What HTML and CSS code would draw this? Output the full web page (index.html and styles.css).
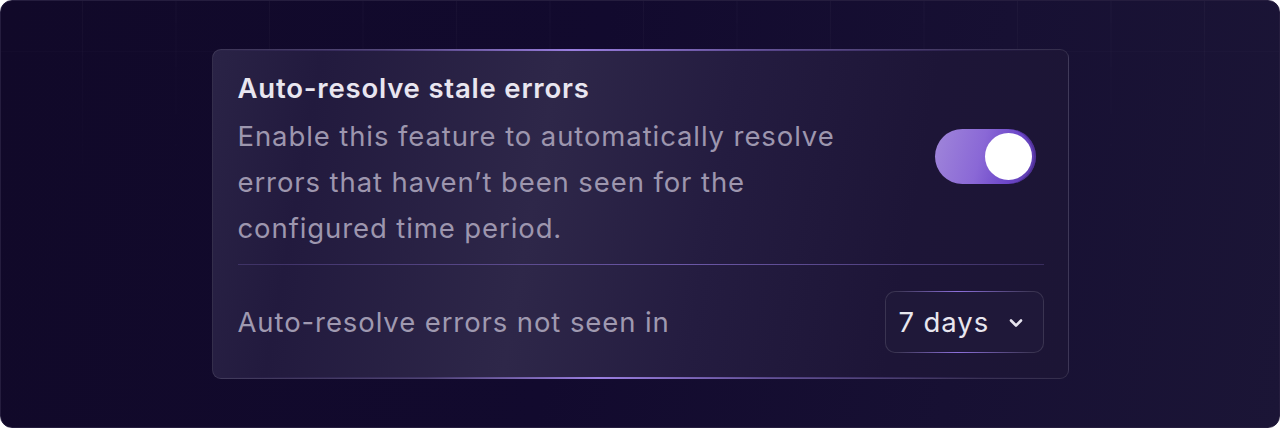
FILE: index.html
```html
<!DOCTYPE html>
<html lang="en">
<head>
<meta charset="utf-8">
<title>Auto-resolve stale errors</title>
<link rel="stylesheet" href="styles.css">
</head>
<body>
<div class="frame">
  <div class="card">
    <div class="card-top">
      <div class="texts">
        <h2 class="title">Auto-resolve stale errors</h2>
        <p class="desc">Enable this feature to automatically resolve errors that haven’t been seen for the configured time period.</p>
      </div>
      <div class="toggle" role="switch" aria-checked="true"><span class="knob"></span></div>
    </div>
    <div class="divider"></div>
    <div class="card-row">
      <span class="row-label">Auto-resolve errors not seen in</span>
      <div class="select">
        <span class="select-value">7 days</span>
        <svg class="chevron" width="16" height="10" viewBox="0 0 16 10" aria-hidden="true"><path d="M3 2.5l5 5 5-5" fill="none" stroke="#e6e3ee" stroke-width="2.6" stroke-linecap="round" stroke-linejoin="round"/></svg>
      </div>
    </div>
  </div>
</div>
</body>
</html>
```

FILE: styles.css
```css
* { box-sizing: border-box; }
html, body { margin: 0; padding: 0; background: #ffffff; }
body { font-family: Inter, "Noto Sans", "Liberation Sans", sans-serif; }

.frame {
  position: relative;
  width: 1280px;
  height: 428px;
  border-radius: 12px;
  overflow: hidden;
  border: 1px solid #251d3e;
  background: linear-gradient(100deg, #110929 0%, #120a2e 45%, #171033 75%, #1b1536 100%);
  display: flex;
  align-items: center;
  justify-content: center;
}
.frame::before {
  content: "";
  position: absolute;
  inset: 0;
  background-image:
    linear-gradient(90deg, rgba(255,255,255,0.03) 1px, transparent 1px),
    linear-gradient(0deg, rgba(255,255,255,0.02) 1px, transparent 1px);
  background-size: 93.5px 93.5px;
  background-position: -12.5px 51px;
  -webkit-mask-image: linear-gradient(180deg, #000 0%, rgba(0,0,0,0.4) 25%, transparent 50%);
  mask-image: linear-gradient(180deg, #000 0%, rgba(0,0,0,0.4) 25%, transparent 50%);
  pointer-events: none;
}

.card {
  position: relative;
  width: 857px;
  height: 330px;
  border-radius: 9px;
  border: 1px solid rgba(255,255,255,0.11);
  background: linear-gradient(100deg, #2a2346 0%, #221a3e 12%, #2e2749 38%, #241c40 58%, #1d1537 80%, #1c1535 100%);
  padding: 21px 24px 0 25px;
  display: flex;
  flex-direction: column;
}
.card::before, .card::after {
  content: "";
  position: absolute;
  left: 0;
  right: 0;
  height: 2px;
  pointer-events: none;
}
.card::before {
  top: -1px;
  background: linear-gradient(90deg, transparent 0%, rgba(150,120,230,0.25) 20%, #9a7ee0 42%, rgba(150,120,230,0.45) 65%, rgba(150,120,230,0.08) 90%, transparent 100%);
}
.card::after {
  bottom: -1px;
  background: linear-gradient(90deg, transparent 0%, rgba(150,120,230,0.2) 25%, #9a7ee0 45%, rgba(150,120,230,0.45) 65%, rgba(150,120,230,0.05) 90%, transparent 100%);
}

.card-top {
  display: flex;
  align-items: center;
  justify-content: space-between;
}
.title {
  margin: 0;
  font-size: 27.5px;
  line-height: 34px;
  font-weight: 600;
  color: #e9e6f0;
  letter-spacing: 0.8px;
}
.desc {
  margin: 8px 0 0;
  width: 620px;
  font-size: 27.5px;
  line-height: 46px;
  font-weight: 400;
  color: #9d96ae;
  letter-spacing: 0.9px;
}

.toggle {
  width: 101px;
  height: 55px;
  border-radius: 28px;
  margin: 0 8px 10px 0;
  padding: 4px;
  background: linear-gradient(105deg, #a086da 0%, #8a68d6 45%, #6b46c8 75%, #5a3ba6 100%);
  display: flex;
  align-items: center;
  justify-content: flex-end;
  box-shadow: inset -2px 0 0 rgba(60,30,120,0.4);
}
.knob {
  width: 47px;
  height: 47px;
  border-radius: 50%;
  background: #ffffff;
}

.divider {
  height: 1px;
  margin-top: 13px;
  background: linear-gradient(90deg, rgba(110,90,170,0.35) 0%, rgba(130,105,200,0.55) 35%, #6c58a8 55%, rgba(110,90,170,0.35) 100%);
}

.card-row {
  display: flex;
  align-items: center;
  justify-content: space-between;
  margin-top: 26px;
}
.row-label {
  font-size: 27.5px;
  line-height: 34px;
  color: #9f99b0;
  letter-spacing: 0.9px;
}
.select {
  position: relative;
  width: 159px;
  height: 62px;
  border-radius: 10px;
  border: 1px solid rgba(255,255,255,0.12);
  background: #1f1839;
  display: flex;
  align-items: center;
  padding: 0 19px 0 13px;
  justify-content: space-between;
}
.select::before, .select::after {
  content: "";
  position: absolute;
  left: 10px;
  right: 10px;
  height: 1px;
  background: linear-gradient(90deg, transparent, #8d70dc 45%, transparent);
}
.select::before { top: -1px; }
.select::after { bottom: -1px; }
.select-value {
  font-size: 27.5px;
  line-height: 34px;
  color: #e8e6ef;
  letter-spacing: 0.9px;
}
.chevron { display: block; margin-top: 1px; }
```
